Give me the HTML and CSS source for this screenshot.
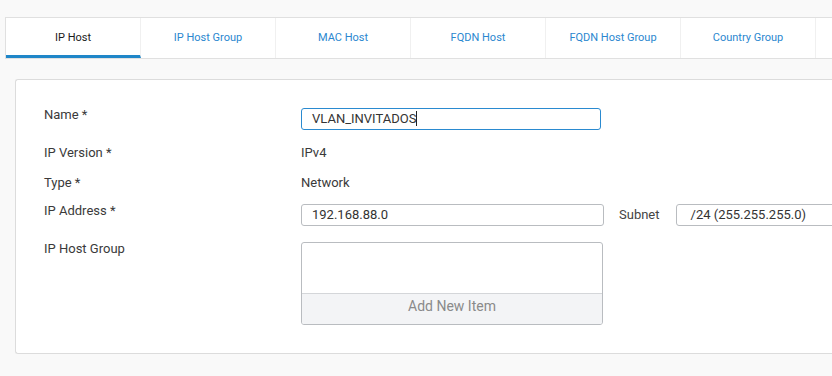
FILE: index.html
```html
<!DOCTYPE html>
<html lang="en">
<head>
    <meta charset="UTF-8">
    <meta name="viewport" content="width=device-width, initial-scale=1.0">
    <title>IP Host</title>
    <link rel="stylesheet" href="styles.css">
</head>
<body>
    <div class="tabs">
        <div class="tab active">IP Host</div>
        <div class="tab">IP Host Group</div>
        <div class="tab">MAC Host</div>
        <div class="tab">FQDN Host</div>
        <div class="tab">FQDN Host Group</div>
        <div class="tab">Country Group</div>
        <div class="tab"></div>
    </div>

    <div class="panel">
        <div class="row row-input">
            <div class="label">Name *</div>
            <div class="field">
                <div class="input focused">VLAN_INVITADOS<span class="caret"></span></div>
            </div>
        </div>
        <div class="row">
            <div class="label">IP Version *</div>
            <div class="value">IPv4</div>
        </div>
        <div class="row">
            <div class="label">Type *</div>
            <div class="value">Network</div>
        </div>
        <div class="row row-input row-ip">
            <div class="label">IP Address *</div>
            <div class="field">
                <div class="input ip">192.168.88.0</div>
                <span class="subnet-label">Subnet</span>
                <div class="input subnet">/24 (255.255.255.0)</div>
            </div>
        </div>
        <div class="row row-input">
            <div class="label">IP Host Group</div>
            <div class="field">
                <div class="list">
                    <div class="list-items"></div>
                    <div class="list-add">Add New Item</div>
                </div>
            </div>
        </div>
    </div>
</body>
</html>
```

FILE: styles.css
```css
body {
    margin: 0;
    background-color: #f9f9f9;
    font-family: Roboto, "Liberation Sans", sans-serif;
    color: #3a3a3a;
    overflow: hidden;
    width: 832px;
    height: 376px;
}

.tabs {
    display: flex;
    box-sizing: border-box;
    margin: 17px 0 0 5px;
    width: 827px;
    height: 42px;
    background-color: white;
    border: 1px solid #e0e0e0;
    border-right: none;
    overflow: hidden;
}

.tab {
    width: 135px;
    flex: none;
    border-right: 1px solid #f0f0f0;
    display: flex;
    align-items: center;
    justify-content: center;
    font-size: 11px;
    color: #2b87cf;
    box-sizing: border-box;
    padding-bottom: 1px;
}

.tab.active {
    color: #1a1a1a;
    border-bottom: 3px solid #1f86c8;
    padding-top: 2px;
}

.panel {
    box-sizing: border-box;
    margin: 20px 0 0 15px;
    width: 817px;
    background-color: white;
    border: 1px solid #dcdcdc;
    border-right: none;
    border-radius: 3px 0 0 3px;
    padding: 26px 0 28px 28px;
    overflow: hidden;
}

.row {
    display: flex;
    align-items: flex-start;
    margin-top: 14px;
    font-size: 13px;
    line-height: 15px;
}

.row:first-child {
    margin-top: 0;
}

.row-ip {
    margin-top: 12px;
}

.label {
    width: 257px;
    flex: none;
    padding-top: 1px;
}

.value {
    padding-top: 1px;
}

.row-input .field {
    margin-top: 2px;
    display: flex;
    align-items: center;
    line-height: 16px;
}

.input {
    box-sizing: border-box;
    flex: none;
    height: 22px;
    border: 1px solid #b9bcc0;
    border-radius: 3px;
    padding: 0 10px;
    font-size: 13px;
    line-height: 20px;
    color: #333;
    background-color: white;
}

.input.focused {
    width: 300px;
    border-color: #2a8ad0;
}

.caret {
    display: inline-block;
    width: 1px;
    height: 15px;
    background-color: #222;
    vertical-align: -3px;
}

.input.ip {
    width: 303px;
}

.subnet-label {
    margin: 0 16px 0 15px;
    color: #444;
}

.input.subnet {
    width: 200px;
    padding-left: 14px;
}

.list {
    box-sizing: border-box;
    width: 302px;
    height: 83px;
    border: 1px solid #b9bcc0;
    border-radius: 3px;
    display: flex;
    flex-direction: column;
    overflow: hidden;
}

.list-items {
    flex: 1;
}

.list-add {
    height: 31px;
    border-top: 1px solid #d4d6d9;
    background-color: #f3f4f6;
    color: #8a8a8a;
    font-size: 14px;
    display: flex;
    align-items: center;
    justify-content: center;
    padding-bottom: 6px;
    box-sizing: border-box;
}
```
